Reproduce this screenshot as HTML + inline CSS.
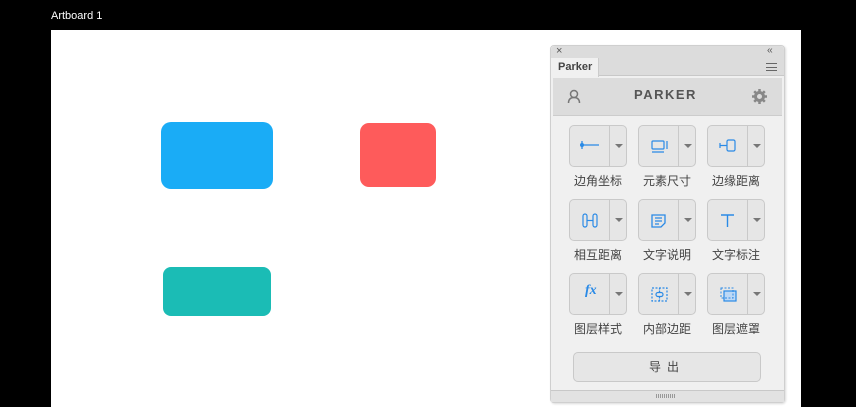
<!DOCTYPE html><html><head><meta charset="utf-8"><style>
*{margin:0;padding:0;box-sizing:border-box}
body{width:856px;height:407px;background:#000;position:relative;overflow:hidden;font-family:"Liberation Sans","Noto Sans CJK SC",sans-serif}
.a{position:absolute}
.btn{position:absolute;width:58px;height:42px;border:1px solid #c9c9c9;border-radius:5px;background:#e6e6e6}
.btn .sep{position:absolute;left:39px;top:0;bottom:0;border-left:1px solid #c9c9c9}
.btn .arr{position:absolute;left:45px;top:18px;width:0;height:0;border-left:4px solid transparent;border-right:4px solid transparent;border-top:4px solid #777}
.btn svg{position:absolute;left:9px;top:10px}
.lb{position:absolute;width:70px;text-align:center;font-size:12px;color:#444}
</style></head><body>
<div class="a" style="left:51px;top:10px;color:#fff;font-size:11px">Artboard 1</div>
<div class="a" style="left:51px;top:30px;width:750px;height:377px;background:#fff"></div>
<div class="a" style="left:161px;top:122px;width:112px;height:67px;background:#1aacf6;border-radius:10px"></div>
<div class="a" style="left:360px;top:123px;width:76px;height:64px;background:#fe5b5b;border-radius:9px"></div>
<div class="a" style="left:163px;top:267px;width:108px;height:49px;background:#1bbcb5;border-radius:8px"></div>
<div class="a" style="left:550px;top:45px;width:235px;height:358px;background:#f0f0f0;border:1px solid #cfcfcf;border-radius:4px;box-shadow:1px 1px 2px rgba(0,0,0,.15)"></div>
<div class="a" style="left:551px;top:46px;width:233px;height:12px;background:#dcdcdc;border-radius:4px 4px 0 0"></div>
<div class="a" style="left:556px;top:45px;font-size:11px;color:#555">×</div>
<div class="a" style="left:767px;top:45px;font-size:10px;color:#555;letter-spacing:-1px">‹‹</div>
<div class="a" style="left:551px;top:58px;width:233px;height:18px;background:#dcdcdc;border-bottom:1px solid #c8c8c8"></div>
<div class="a" style="left:551px;top:58px;width:48px;height:19px;background:#f0f0f0;border-right:1px solid #ccc;font-size:11px;font-weight:bold;color:#444;padding:3px 0 0 7px">Parker</div>
<div class="a" style="left:766px;top:63px;width:11px;height:8px;border-top:1px solid #666;border-bottom:1px solid #666"></div><div class="a" style="left:766px;top:67px;width:11px;border-top:1px solid #666"></div>
<div class="a" style="left:553px;top:78px;width:229px;height:38px;background:#dcdcdc;border-bottom:1px solid #ccc"></div>
<div class="a" style="left:634px;top:87px;font-size:13px;font-weight:bold;color:#555;letter-spacing:1.5px">PARKER</div>
<svg class="a" style="left:567px;top:89px" width="14" height="15"><circle cx="7" cy="5" r="3.5" fill="none" stroke="#777" stroke-width="1.5"/><path d="M1.5 14c0-4 2.5-5.5 5.5-5.5s5.5 1.5 5.5 5.5" fill="none" stroke="#777" stroke-width="1.5"/></svg>
<svg class="a" style="left:752px;top:89px" width="15" height="15"><circle cx="7.5" cy="7.5" r="4" fill="none" stroke="#888" stroke-width="3"/><g stroke="#888" stroke-width="2.5"><path d="M7.5 0v3M7.5 12v3M0 7.5h3M12 7.5h3M2.2 2.2l2 2M10.8 10.8l2 2M2.2 12.8l2-2M10.8 4.2l2-2"/></g></svg>

<div class="btn" style="left:569px;top:125px"><div class="sep"></div><div class="arr"></div><svg width="22" height="22"><g stroke="#2a8ae6" stroke-width="1.3" fill="none"><path d="M3 5v8M3 9h17"/></g><circle cx="3" cy="9" r="2" fill="#2a8ae6"/></svg></div>
<div class="btn" style="left:638px;top:125px"><div class="sep"></div><div class="arr"></div><svg width="22" height="22"><g stroke="#2a8ae6" stroke-width="1.2" fill="none"><rect x="4" y="5" width="12" height="8" rx="1"/><path d="M19 5v8M4 16h12"/></g></svg></div>
<div class="btn" style="left:707px;top:125px"><div class="sep"></div><div class="arr"></div><svg width="22" height="22"><g stroke="#2a8ae6" stroke-width="1.2" fill="none"><rect x="10" y="4" width="8" height="11" rx="1.5"/><path d="M3 7v5M3 9.5h7"/></g></svg></div>
<div class="lb" style="left:563px;top:172px">边角坐标</div>
<div class="lb" style="left:632px;top:172px">元素尺寸</div>
<div class="lb" style="left:701px;top:172px">边缘距离</div>

<div class="btn" style="left:569px;top:199px"><div class="sep"></div><div class="arr"></div><svg width="22" height="22"><g stroke="#2a8ae6" stroke-width="1.2" fill="none"><rect x="4" y="4" width="4" height="13" rx="2"/><rect x="14" y="4" width="4" height="13" rx="2"/><path d="M8 10.5h6"/></g></svg></div>
<div class="btn" style="left:638px;top:199px"><div class="sep"></div><div class="arr"></div><svg width="22" height="22"><g stroke="#2a8ae6" stroke-width="1.3" fill="none"><path d="M4 5h13v8l-4 4H4z"/><path d="M7 8h7M7 11h7M7 14h4"/></g></svg></div>
<div class="btn" style="left:707px;top:199px"><div class="sep"></div><div class="arr"></div><svg width="22" height="22"><g stroke="#2a8ae6" stroke-width="1.4" fill="none"><path d="M4 5h13M10.5 5v12"/></g></svg></div>
<div class="lb" style="left:563px;top:246px">相互距离</div>
<div class="lb" style="left:632px;top:246px">文字说明</div>
<div class="lb" style="left:701px;top:246px">文字标注</div>

<div class="btn" style="left:569px;top:273px"><div class="sep"></div><div class="arr"></div><div class="a" style="left:15px;top:9px;color:#2a8ae6;font-style:italic;font-weight:bold;font-size:14px;font-family:'Liberation Serif',serif">fx</div></div>
<div class="btn" style="left:638px;top:273px"><div class="sep"></div><div class="arr"></div><svg width="22" height="22"><g stroke="#2a8ae6" stroke-width="1.2" fill="none"><rect x="4" y="4" width="15" height="13" stroke-dasharray="2 1.5"/><rect x="8" y="8.5" width="7" height="4" rx="2"/><path d="M11.5 4v4M11.5 13v4" stroke-dasharray="1.5 1"/></g></svg></div>
<div class="btn" style="left:707px;top:273px"><div class="sep"></div><div class="arr"></div><svg width="22" height="22"><rect x="7" y="7" width="12" height="10" fill="#bcd8f6" stroke="#2a8ae6" stroke-width="1.2"/><rect x="4" y="4" width="12" height="10" fill="none" stroke="#2a8ae6" stroke-width="1" stroke-dasharray="2 1.5"/></svg></div>
<div class="lb" style="left:563px;top:320px">图层样式</div>
<div class="lb" style="left:632px;top:320px">内部边距</div>
<div class="lb" style="left:701px;top:320px">图层遮罩</div>

<div class="a" style="left:573px;top:352px;width:188px;height:30px;border:1px solid #c9c9c9;border-radius:5px;background:#e6e6e6;text-align:center;font-size:12px;color:#444;line-height:28px;letter-spacing:6px">导出</div>
<div class="a" style="left:551px;top:390px;width:233px;height:1px;background:#c8c8c8"></div>
<div class="a" style="left:551px;top:391px;width:233px;height:11px;background:#e2e2e2"></div>
<div class="a" style="left:656px;top:394px;width:20px;height:4px;background:repeating-linear-gradient(90deg,#999 0 1px,transparent 1px 2px)"></div>
</body></html>
